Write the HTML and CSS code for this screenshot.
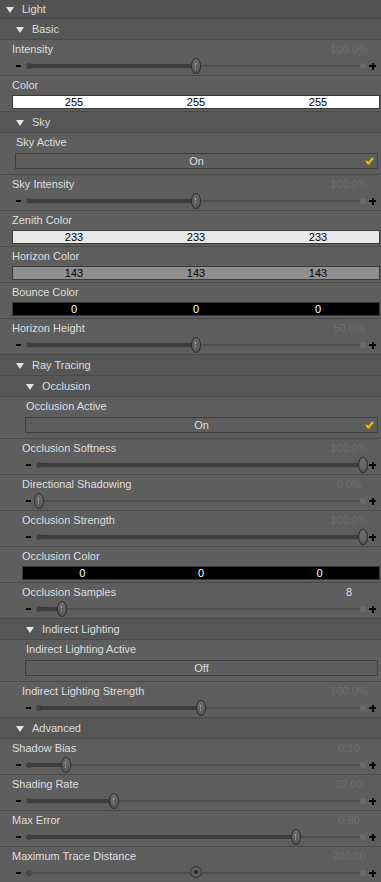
FILE: index.html
```html
<!DOCTYPE html>
<html lang="en">
<head>
    <meta charset="UTF-8">
    <meta name="viewport" content="width=device-width, initial-scale=1.0">
    <title>Light Properties</title>
    <link rel="stylesheet" href="styles.css">
</head>
<body>
<div class="panel">
    <div class="head top lv0"><span class="tri"></span>Light</div>

    <!-- Basic -->
    <div class="head lv1"><span class="tri"></span>Basic</div>
    <div class="row in1">
        <div class="row-top"><span class="label">Intensity</span><span class="value">100.0%</span></div>
        <div class="slider"><span class="minus"></span><div class="track"><div class="rail"><div class="fill" style="width:50%"></div><div class="knob" style="left:50%"></div></div></div><span class="plus"></span></div>
    </div>
    <div class="row in1">
        <div class="row-top"><span class="label">Color</span></div>
        <div class="swatch" style="background:#fff"><span>255</span><span>255</span><span>255</span></div>
    </div>

    <!-- Sky -->
    <div class="head lv1"><span class="tri"></span>Sky</div>
    <div class="row bool in1">
        <div class="row-top"><span class="label">Sky Active</span></div>
        <div class="toggle">On<svg class="check" width="9" height="8" viewBox="0 0 9 8"><path d="M1 4 L3.5 6.5 L8 1" fill="none" stroke="#f2c200" stroke-width="2"/></svg></div>
    </div>
    <div class="row in1">
        <div class="row-top"><span class="label">Sky Intensity</span><span class="value">100.0%</span></div>
        <div class="slider"><span class="minus"></span><div class="track"><div class="rail"><div class="fill" style="width:50%"></div><div class="knob" style="left:50%"></div></div></div><span class="plus"></span></div>
    </div>
    <div class="row in1">
        <div class="row-top"><span class="label">Zenith Color</span></div>
        <div class="swatch" style="background:#e9e9e9"><span>233</span><span>233</span><span>233</span></div>
    </div>
    <div class="row in1">
        <div class="row-top"><span class="label">Horizon Color</span></div>
        <div class="swatch" style="background:#8f8f8f"><span>143</span><span>143</span><span>143</span></div>
    </div>
    <div class="row in1">
        <div class="row-top"><span class="label">Bounce Color</span></div>
        <div class="swatch dark" style="background:#000"><span>0</span><span>0</span><span>0</span></div>
    </div>
    <div class="row in1">
        <div class="row-top"><span class="label">Horizon Height</span><span class="value">50.0%</span></div>
        <div class="slider"><span class="minus"></span><div class="track"><div class="rail"><div class="fill" style="width:50%"></div><div class="knob" style="left:50%"></div></div></div><span class="plus"></span></div>
    </div>

    <!-- Ray Tracing -->
    <div class="head lv1"><span class="tri"></span>Ray Tracing</div>
    <div class="head lv2"><span class="tri"></span>Occlusion</div>
    <div class="row bool in2">
        <div class="row-top"><span class="label">Occlusion Active</span></div>
        <div class="toggle">On<svg class="check" width="9" height="8" viewBox="0 0 9 8"><path d="M1 4 L3.5 6.5 L8 1" fill="none" stroke="#f2c200" stroke-width="2"/></svg></div>
    </div>
    <div class="row in2">
        <div class="row-top"><span class="label">Occlusion Softness</span><span class="value">100.0%</span></div>
        <div class="slider"><span class="minus"></span><div class="track"><div class="rail"><div class="fill" style="width:100%"></div><div class="knob" style="left:100%"></div></div></div><span class="plus"></span></div>
    </div>
    <div class="row in2">
        <div class="row-top"><span class="label">Directional Shadowing</span><span class="value">0.0%</span></div>
        <div class="slider"><span class="minus"></span><div class="track"><div class="rail"><div class="fill" style="width:0%"></div><div class="knob" style="left:0%"></div></div></div><span class="plus"></span></div>
    </div>
    <div class="row in2">
        <div class="row-top"><span class="label">Occlusion Strength</span><span class="value">100.0%</span></div>
        <div class="slider"><span class="minus"></span><div class="track"><div class="rail"><div class="fill" style="width:100%"></div><div class="knob" style="left:100%"></div></div></div><span class="plus"></span></div>
    </div>
    <div class="row in2">
        <div class="row-top"><span class="label">Occlusion Color</span></div>
        <div class="swatch dark" style="background:#000"><span>0</span><span>0</span><span>0</span></div>
    </div>
    <div class="row in2">
        <div class="row-top"><span class="label">Occlusion Samples</span><span class="value bright">8</span></div>
        <div class="slider"><span class="minus"></span><div class="track"><div class="rail"><div class="fill" style="width:7%"></div><div class="knob" style="left:7%"></div></div></div><span class="plus"></span></div>
    </div>

    <div class="head lv2"><span class="tri"></span>Indirect Lighting</div>
    <div class="row bool in2">
        <div class="row-top"><span class="label">Indirect Lighting Active</span></div>
        <div class="toggle">Off</div>
    </div>
    <div class="row in2">
        <div class="row-top"><span class="label">Indirect Lighting Strength</span><span class="value">100.0%</span></div>
        <div class="slider"><span class="minus"></span><div class="track"><div class="rail"><div class="fill" style="width:50%"></div><div class="knob" style="left:50%"></div></div></div><span class="plus"></span></div>
    </div>

    <!-- Advanced -->
    <div class="head lv1"><span class="tri"></span>Advanced</div>
    <div class="row in1">
        <div class="row-top"><span class="label">Shadow Bias</span><span class="value">0.10</span></div>
        <div class="slider"><span class="minus"></span><div class="track"><div class="rail"><div class="fill" style="width:11%"></div><div class="knob" style="left:11%"></div></div></div><span class="plus"></span></div>
    </div>
    <div class="row in1">
        <div class="row-top"><span class="label">Shading Rate</span><span class="value">32.00</span></div>
        <div class="slider"><span class="minus"></span><div class="track"><div class="rail"><div class="fill" style="width:25.4%"></div><div class="knob" style="left:25.4%"></div></div></div><span class="plus"></span></div>
    </div>
    <div class="row in1">
        <div class="row-top"><span class="label">Max Error</span><span class="value">0.80</span></div>
        <div class="slider"><span class="minus"></span><div class="track"><div class="rail"><div class="fill" style="width:80%"></div><div class="knob" style="left:80%"></div></div></div><span class="plus"></span></div>
    </div>
    <div class="row in1">
        <div class="row-top"><span class="label">Maximum Trace Distance</span><span class="value">200.00</span></div>
        <div class="slider"><span class="minus"></span><div class="track"><div class="rail"><div class="knob dial" style="left:50%"></div></div></div><span class="plus"></span></div>
    </div>
</div>
</body>
</html>
```
FILE: styles.css
```css
:root {
    --row-bg: #5e5e5e;
    --head-bg: #565656;
    --line: #4a4a4a;
    --text: #dedede;
    --faint: #6e6e6e;
}
body {
    margin: 0;
    background: var(--row-bg);
    font-family: "Liberation Sans", Arial, sans-serif;
    font-size: 11px;
    color: var(--text);
}
.panel {
    width: 381px;
    overflow: hidden;
}

/* group headers */
.head {
    display: flex;
    align-items: center;
    height: 21px;
    box-sizing: border-box;
    background: var(--head-bg);
    border-bottom: 1px solid var(--line);
}
.head.top {
    height: 19px;
    background: #535353;
}
.head.lv0 { padding-left: 6px; }
.head.lv1 { padding-left: 16px; }
.head.lv2 { padding-left: 26px; }
.tri {
    width: 0;
    height: 0;
    border-left: 4px solid transparent;
    border-right: 4px solid transparent;
    border-top: 6px solid #e4e4e4;
    margin-right: 8px;
    margin-top: 1px;
}

/* property rows */
.row {
    height: 36px;
    box-sizing: border-box;
    border-bottom: 1px solid var(--line);
}
.row.bool { height: 42px; }
.row.in1 { padding-left: 12px; }
.row.in2 { padding-left: 22px; }
.row-top {
    display: flex;
    align-items: center;
    height: 18px;
}
.label {
    flex: 1;
}
.bool .label {
    padding-left: 4px;
}
.value {
    width: 58px;
    margin-right: 3px;
    text-align: center;
    color: var(--faint);
}
.value.bright {
    color: var(--text);
}

/* slider */
.slider {
    display: flex;
    align-items: center;
    height: 16px;
}
.minus {
    width: 5px;
    height: 2px;
    background: #000;
    margin: 0 5px 0 4px;
}
.plus {
    position: relative;
    width: 7px;
    height: 7px;
    margin: 0 5px 0 3px;
}
.plus::before, .plus::after {
    content: "";
    position: absolute;
    background: #000;
}
.plus::before { left: 0; top: 2.5px; width: 7px; height: 2px; }
.plus::after { left: 2.5px; top: 0; width: 2px; height: 7px; }
.track {
    flex: 1;
    position: relative;
    height: 16px;
}
.track::before, .track::after {
    content: "";
    position: absolute;
    top: 5px;
    width: 6px;
    height: 6px;
    border-radius: 50%;
}
.track::before { left: 0; background: #444; }
.track::after { right: 0; background: #6a6a6a; }
.rail {
    position: absolute;
    left: 3px;
    right: 3px;
    top: 7px;
    height: 2px;
    background: #4d4d4d;
}
.fill {
    position: absolute;
    left: 0;
    top: -1px;
    height: 4px;
    background: #3c3c3c;
}
.knob {
    position: absolute;
    top: -7px;
    width: 8px;
    height: 14px;
    margin-left: -5px;
    border: 1px solid #2f2f2f;
    border-radius: 50%;
    background: linear-gradient(#6c6c6c, #585858);
}
.knob::after {
    content: "";
    position: absolute;
    left: 3px;
    top: 4px;
    height: 6px;
    border-left: 1px dotted #a8a8a8;
}
.knob.dial {
    top: -6px;
    width: 10px;
    height: 10px;
    margin-left: -6px;
    background: #5e5e5e;
}
.knob.dial::after {
    left: 3px;
    top: 3px;
    width: 4px;
    height: 4px;
    border: none;
    border-radius: 50%;
    background: #2a2a2a;
}

/* colour swatch */
.swatch {
    display: flex;
    height: 14px;
    box-sizing: border-box;
    margin: 1px 1px 0 0;
    border: 1px solid #3a3a3a;
    color: #000;
    line-height: 12px;
}
.swatch span {
    flex: 1;
    text-align: center;
}
.swatch.dark {
    color: #fff;
}

/* on/off toggle */
.toggle {
    position: relative;
    height: 16px;
    box-sizing: border-box;
    margin: 2px 3px 0 3px;
    border: 1px solid #3e3e3e;
    text-align: center;
    line-height: 14px;
}
.check {
    position: absolute;
    right: 3px;
    top: 3px;
}
```
